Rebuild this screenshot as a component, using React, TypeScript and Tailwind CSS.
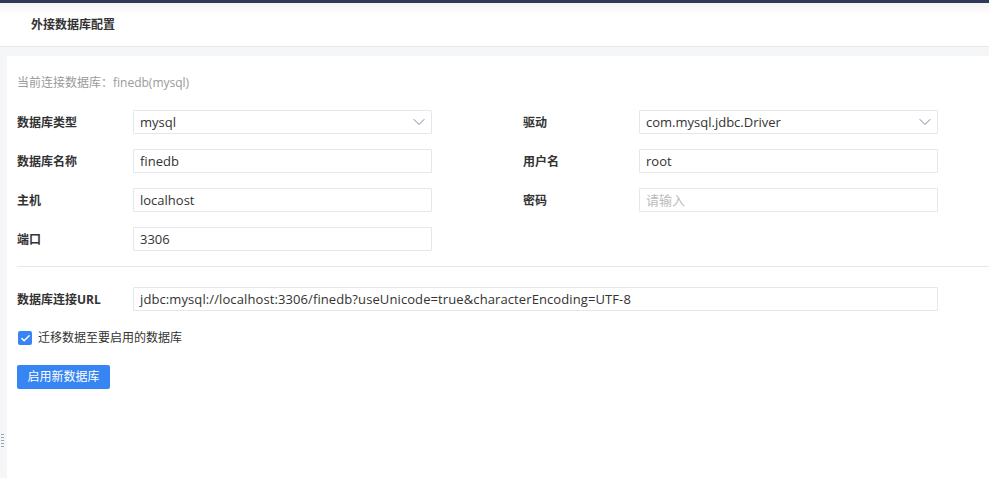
import { ChevronDown, Check } from 'lucide-react';

const font = { fontFamily: '"Open Sans", "Noto Sans CJK SC", sans-serif' };

function Field({ label, value, placeholder, select }: { label: string; value?: string; placeholder?: string; select?: boolean }) {
  return (
    <div className="flex items-center h-6">
      <div className="w-[116px] shrink-0 text-[12px] font-bold text-[#333] pt-[2px]">{label}</div>
      <div className="w-[299px] h-6 border border-[#e5e7ea] bg-white rounded-[1px] flex items-center pl-[6px] pr-[2px]">
        {value ? (
          <span className="flex-1 text-[13px] text-[#333] leading-none">{value}</span>
        ) : (
          <span className="flex-1 text-[13px] text-[#bbb] leading-none">{placeholder}</span>
        )}
        {select && <ChevronDown size={20} strokeWidth={1.1} className="text-[#6b7a99]" />}
      </div>
    </div>
  );
}

export default function App() {
  return (
    <div className="w-[989px] h-[478px] bg-[#f5f6f8] overflow-hidden flex flex-col" style={font}>
      {/* top bar */}
      <div className="h-[3px] bg-[#2c3a57] shrink-0" />

      {/* header */}
      <div className="h-[44px] shrink-0 bg-gradient-to-b from-[#f4f4f4] to-white to-[30%] border-b border-[#e6e8ee] flex items-center pl-[31px]">
        <span className="text-[12px] font-bold text-[#333]">外接数据库配置</span>
      </div>

      {/* body */}
      <div className="flex-1 flex pt-[9px]">
        <div className="w-[7px] shrink-0 flex flex-col justify-end pb-[31px]">
          <div className="flex flex-col gap-[2px] pl-[1px]">
            {[0, 1, 2, 3, 4].map((i) => (
              <div key={i} className="w-[3px] h-[1px] bg-[#9aa3b5]" />
            ))}
          </div>
        </div>
        <div className="flex-1 bg-white pl-[10px] pt-[19px]">
          <div className="text-[12px] text-[#9a9a9a] h-4 leading-4">当前连接数据库：finedb(mysql)</div>

          <div className="grid grid-cols-[415px_415px] gap-x-[91px] gap-y-[15px] mt-[19px]">
            <Field label="数据库类型" value="mysql" select />
            <Field label="驱动" value="com.mysql.jdbc.Driver" select />
            <Field label="数据库名称" value="finedb" />
            <Field label="用户名" value="root" />
            <Field label="主机" value="localhost" />
            <Field label="密码" placeholder="请输入" />
            <Field label="端口" value="3306" />
          </div>

          <div className="h-px bg-[#e6e8ec] mt-[15px]" />

          <div className="flex items-center h-6 mt-[20px]">
            <div className="w-[116px] shrink-0 text-[12px] font-bold text-[#333] pt-[2px]">数据库连接URL</div>
            <div className="w-[805px] h-6 border border-[#e5e7ea] rounded-[1px] flex items-center pl-[6px]">
              <span className="text-[13px] text-[#333] leading-none tracking-[0.1px]">
                jdbc:mysql://localhost:3306/finedb?useUnicode=true&amp;characterEncoding=UTF-8
              </span>
            </div>
          </div>

          <div className="flex items-center mt-[19px] h-4">
            <div className="ml-[1px] w-[14px] h-[14px] rounded-[2px] bg-[#3685f2] flex items-center justify-center">
              <Check size={11} strokeWidth={3.2} className="text-white" />
            </div>
            <span className="ml-[6px] text-[12px] text-[#333]">迁移数据至要启用的数据库</span>
          </div>

          <button className="mt-[19px] w-[93px] h-6 bg-[#3685f2] rounded-[2px] text-white text-[12px] flex items-center justify-center">
            启用新数据库
          </button>
        </div>
      </div>
    </div>
  );
}
